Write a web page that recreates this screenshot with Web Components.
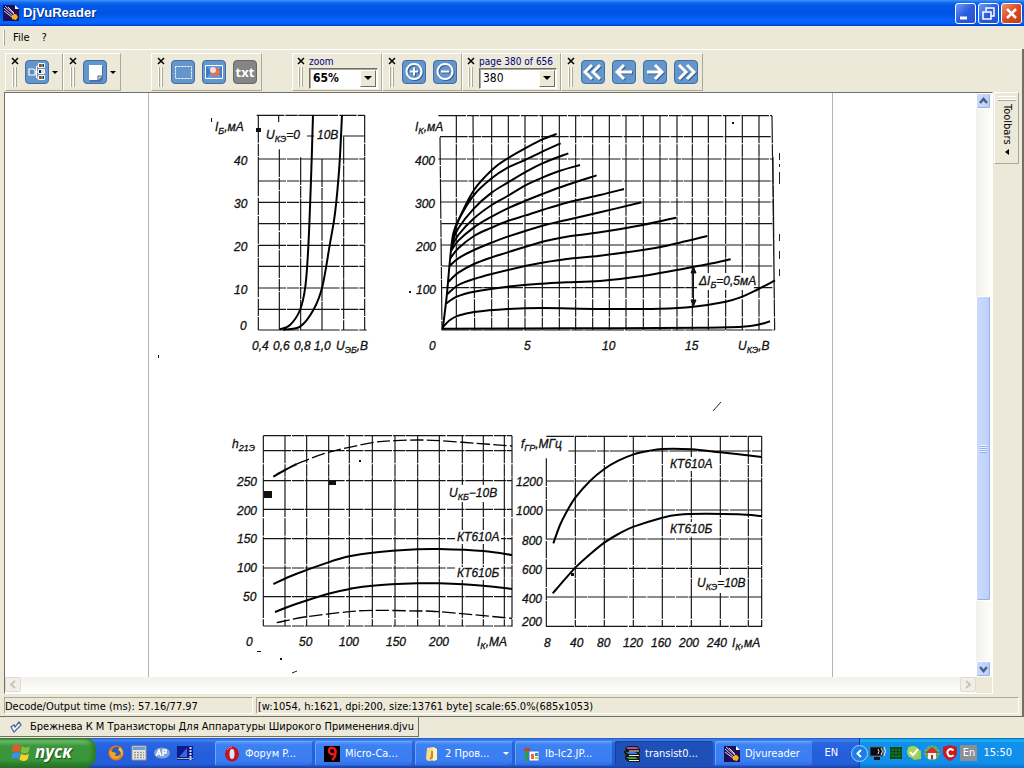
<!DOCTYPE html>
<html lang="ru">
<head>
<meta charset="utf-8">
<title>DjVuReader</title>
<style>
    html, body { height: 100%; }
    body {
        margin: 0;
        display: flex;
        flex-direction: column;
        overflow: hidden;
        background: #ece9d8;
        color: #000;
        font: 11px/14px "DejaVu Sans Condensed", "Liberation Sans", sans-serif;
    }
    reader-window { flex: 1; min-height: 0; }
</style>
</head>
<body>

<reader-window caption="DjVuReader">
    <tool-group slot="tools">
        <tool-button icon="layout" label="Layout" menu></tool-button>
    </tool-group>
    <tool-group slot="tools">
        <tool-button icon="page" label="Page view" menu></tool-button>
    </tool-group>
    <tool-group slot="tools" apart>
        <tool-button icon="select" label="Select"></tool-button>
        <tool-button icon="image" label="Image"></tool-button>
        <tool-button icon="txt" label="Text" grey></tool-button>
    </tool-group>
    <tool-group slot="tools" apart narrow>
        <combo-box label="zoom" value="65%" bold></combo-box>
    </tool-group>
    <tool-group slot="tools">
        <tool-button icon="plus" label="Zoom in"></tool-button>
        <tool-button icon="minus" label="Zoom out"></tool-button>
    </tool-group>
    <tool-group slot="tools" narrow>
        <combo-box label="page 380 of 656" value="380"></combo-box>
    </tool-group>
    <tool-group slot="tools">
        <tool-button icon="first" label="First page"></tool-button>
        <tool-button icon="prev" label="Previous page"></tool-button>
        <tool-button icon="next" label="Next page"></tool-button>
        <tool-button icon="last" label="Last page"></tool-button>
    </tool-group>
    <scan-page></scan-page>
    <span slot="time">Decode/Output time (ms): 57.16/77.97</span>
    <span slot="info">[w:1054, h:1621, dpi:200, size:13761 byte] scale:65.0%(685x1053)</span>
    <span slot="tab">Брежнева К М Транзисторы Для Аппаратуры Широкого Применения.djvu</span>
</reader-window>

<task-bar>
    <xp-icon slot="quick" name="firefox"></xp-icon>
    <xp-icon slot="quick" name="calc"></xp-icon>
    <xp-icon slot="quick" name="ap"></xp-icon>
    <xp-icon slot="quick" name="film"></xp-icon>
    <task-item icon="opera">Форум P...</task-item>
    <task-item icon="nine">Micro-Ca...</task-item>
    <task-item icon="folder" group>2 Пров...</task-item>
    <task-item icon="paint">Ib-Ic2.JP...</task-item>
    <task-item icon="rar" active>transist0...</task-item>
    <task-item icon="djvu">Djvureader</task-item>
    <xp-icon slot="tray" name="monitor"></xp-icon>
    <xp-icon slot="tray" name="cpu"></xp-icon>
    <xp-icon slot="tray" name="shield"></xp-icon>
    <xp-icon slot="tray" name="house"></xp-icon>
    <xp-icon slot="tray" name="comodo"></xp-icon>
</task-bar>

<script>
// ---------- icons ----------
const shade = (d, w) =>
    `<path d="${d}" transform="translate(1 1)" fill="none" stroke="#3a5f8c" stroke-width="${w}"/>
     <path d="${d}" fill="none" stroke="#fff" stroke-width="${w}"/>`;

// [size, markup]
const ICONS = {
    djvu: [16, `<path d="M0 0h12l4 4v12H0z" fill="#1c0f55"/><path d="M12 0v4h4z" fill="#fff"/>
        <path d="M1 3l10 9M2 1l10 9M1 6l9 7M5 2l6 6" stroke="#e9d3ee" stroke-width="1" fill="none"/>
        <path d="M9 10l4-1 2 3-2 3-4-1z" fill="#f5b21c"/>`],
    layout: [24, `<path d="M4 9h4l2 1v5H4z" fill="#5b8dc4" stroke="#fff" stroke-width="1.2"/><path d="M10 12h4M12 6h2M12 18h2M11.500 6v12" stroke="#fff" fill="none"/>
        <g stroke="#fff" fill="#222"><path d="M13.500 3.500h6v4h-6zM13.500 9.500h6v4h-6zM13.500 15.500h6v4h-6z"/></g>
        <path d="M14 4h2v3h-2zM14 16h2v3h-2z" fill="#e22"/><path d="M16 4h2v3h-2zM16 16h2v3h-2z" fill="#2b2"/><path d="M18 4h1v3h-1zM18 16h1v3h-1z" fill="#22e"/><path d="M16 10h3v3h-3z" fill="#ddd"/>`],
    page: [24, `<path d="M7 6h13v14l-3 2H7z" fill="#4a73a3"/><path d="M6 5h13v11l-4 4H6z" fill="#fff"/><path d="M15 20v-4h4" fill="#ccc" stroke="#456a97"/>`],
    select: [24, `<path d="M4.500 6.500h16v12h-16z" fill="none" stroke="#fff" stroke-dasharray="2 1"/>`],
    image: [24, `<path d="M3.500 5.500h17v13h-17z" fill="#5c9fe6" stroke="#fff"/><path d="M4 6l6 6-6 6zM20 6l-5 6 5 6z" fill="#3f7cc5"/>
        <circle cx="13" cy="12" r="5" fill="#d8745e"/><circle cx="11" cy="10" r="3" fill="#fbe0d8"/>`],
    plus: [24, shade('M12 4a7.500 7.500 0 1 0 .1 0zM12 7.500v8M8 11.500h8', 2)],
    minus: [24, shade('M12 4a7.500 7.500 0 1 0 .1 0zM8 11.500h8', 2)],
    first: [24, shade('M11 5l-7 7 7 7M19 5l-7 7 7 7', 3)],
    prev: [24, shade('M20 12H6M12 5l-7 7 7 7', 3)],
    next: [24, shade('M4 12h14M12 5l7 7-7 7', 3)],
    last: [24, shade('M5 5l7 7-7 7M13 5l7 7-7 7', 3)],
    clip: [12, `<path d="M1 6l3 5 7-7-2-3-4 5-1-2z" fill="#fff" stroke="#4a6a9c" stroke-width="1.300"/>`],
    flag: [20, `<path d="M2 4q4-3 8 0l-1.500 6q-4-2-8 0z" fill="#e9562b"/><path d="M11 4q4 3 8 0l-1.500 6q-4 3-8 0z" fill="#7dc242"/>
        <path d="M.3 11.500q4-3 8 0L7 17q-4-2-8 0z" transform="translate(1)" fill="#3f8fe8"/><path d="M10 11.500q4 3 8 0l-1.500 6q-4 3-8 0z" fill="#fbd02c"/>`],
    firefox: [16, `<circle cx="8" cy="8" r="7.500" fill="#e8761c"/><circle cx="8.500" cy="6.500" r="4.500" fill="#2b5fb5"/><path d="M1 3q0 4 4 4l3 1-1 3q4 1 6-2-1 5-6 5-6-1-6-11z" fill="#f6a424"/><path d="M12 2q4 4 2 9-1-5-4-6z" fill="#f9c13d"/>`],
    calc: [16, `<path d="M1 1h14v14H1z" fill="#e8e8e2" stroke="#9a9a90"/><path d="M2 2h12v3H2z" fill="#6f9bd8"/><path d="M3 7.500h10M3 10h10M3 12.500h10" stroke="#9a9a9a" stroke-dasharray="2 1" stroke-width="1.500"/>`],
    ap: [16, `<ellipse cx="8" cy="8" rx="8" ry="5.500" fill="#7fa3d6"/><path d="M2 11l3-6 2 6M3 9h3M9 11V5h3v3H9" stroke="#fff" fill="none" stroke-width="1.500"/>`],
    film: [16, `<path d="M0 1h16v14H0z" fill="#0b1b8a"/><path d="M2 12l8-9v9z" fill="#3567e8"/><path d="M13.500 2v13" stroke="#dde" stroke-width="2" stroke-dasharray="2 1"/><path d="M0 13.500h16" stroke="#aab"/>`],
    opera: [16, `<ellipse cx="8" cy="8" rx="7" ry="7.500" fill="#c4121a"/><ellipse cx="8" cy="8" rx="2.500" ry="5" fill="#dce6fb"/><path d="M3 4q2-3 5-3" stroke="#f77" fill="none"/>`],
    nine: [16, `<path d="M0 0h16v16H0z" fill="#000"/><path d="M11 8Q5 9 5 5t3.500-3Q12 2 11.500 7T8 14" stroke="#f01818" stroke-width="2.500" fill="none"/>`],
    folder: [16, `<path d="M3 2l6-1 4 2v11l-9 1-2-2z" fill="#f6dc8c"/><path d="M9 1l4 2v11l-4 1z" fill="#fff2bf"/><path d="M8 5v6l-2 2" stroke="#c48a2c" stroke-width="2" fill="none"/>`],
    paint: [16, `<path d="M5 5h10v10H5z" fill="#fff" stroke="#3a78d0"/><path d="M2.500 5v10" stroke="#2f9b4a" stroke-width="3"/><path d="M0 2h6v3H0z" fill="#c8432b"/><path d="M7 8h3v5H7z" fill="#f06a28"/><path d="M11 7h3v3h-3z" fill="#3b82e0"/><path d="M11 11h3v2h-3z" fill="#f4bc2c"/>`],
    rar: [16, `<path d="M1 2l3-2h9l3 3v3l-1 1 1 1v3l-1 1 1 1v3H5l-4-3v-3l1-1-2-2V5l2-1z" fill="#181818"/>
        <path d="M2 2l2-1h8l3 2H4z" fill="#c04aa8"/><path d="M2 6h9l3 2H5z" fill="#3b7ee0"/><path d="M2 11h9l3 2H5z" fill="#3ea54b"/>
        <path d="M5 5h10M5 9.500h10M5 14.500h10" stroke="#f2efe0"/>`],
    monitor: [16, `<path d="M0 2h13v9H0z" fill="#0a0a14" stroke="#566"/><path d="M4 12h6v3H4z" fill="#111"/><path d="M8 4q2 2 0 5M11 3q3 3 0 7M14 2q3 4 0 9" stroke="#e8eef8" fill="none"/>`],
    cpu: [16, `<path d="M2 2h12v12H2z" fill="#063d12"/><path d="M2 5h12M2 8h12M2 11h12M5 2v12M8 2v12M11 2v12" stroke="#127a2a" stroke-width="1"/>`],
    shield: [16, `<path d="M2 2l6-1 7 5v8l-7 1-6-6z" fill="#9ad04e"/><circle cx="7" cy="7" r="6" fill="#a8d45a"/><path d="M4 7l3 3 5-6" stroke="#fff" stroke-width="2" fill="none"/>`],
    house: [16, `<circle cx="8" cy="8" r="7" fill="#6aa84f" stroke="#9c6" stroke-dasharray="2 2"/><path d="M1 8l7-6 7 6z" fill="#c33"/><path d="M4 8h8v6H4z" fill="#f2f2ec"/><path d="M7 10h2v4H7z" fill="#a33"/>`],
    comodo: [16, `<path d="M1 2l7-2 7 2v7q-2 5-7 7-5-2-7-7z" fill="#cc1a1c"/><path d="M11.500 5.500Q9 3 6.500 5T7 11q3 1 4.500-1" stroke="#fff" stroke-width="2" fill="none"/>`]
};

class XpIcon extends HTMLElement {
    constructor() {
        super();
        this.attachShadow({ mode: 'open' });
    }

    connectedCallback() {
        const [size, body] = ICONS[this.getAttribute('name')];
        this.shadowRoot.innerHTML = `
            <style>:host { display: block; flex: none; } svg { display: block; }</style>
            <svg width="${size}" height="${size}" viewBox="0 0 ${size} ${size}" aria-hidden="true">${body}</svg>`;
    }
}
customElements.define('xp-icon', XpIcon);


// ---------- toolbar ----------
class ToolGroup extends HTMLElement {
    constructor() {
        super();
        this.attachShadow({ mode: 'open' });
        this.shadowRoot.innerHTML = `
            <style>
                :host {
                    display: flex;
                    box-sizing: border-box;
                    height: 38px;
                    padding-right: 4px;
                    border: 1px solid;
                    border-color: #fff #aca899 #aca899 #fff;
                }
                :host([apart]) { margin-left: 30px; }
                :host([narrow]) { padding-right: 3px; }
                .side {
                    width: 18px;
                    display: flex;
                    flex-direction: column;
                    align-items: center;
                    padding-top: 3px;
                }
                :host([narrow]) .side { width: 16px; }
                button { display: block; width: 8px; height: 8px; padding: 0; border: 0; background: none; }
                svg { display: block; }
                .grip {
                    width: 2px;
                    height: 20px;
                    margin-top: 2px;
                    border: solid #aca899;
                    border-width: 0 1px;
                    box-shadow: -1px 0 #fff, inset -1px 0 #fff;
                }
                .items { display: flex; gap: 7px; align-items: center; }
            </style>
            <div class="side">
                <button aria-label="Close toolbar"><svg width="8" height="8"><path d="M1 1l6 6M7 1L1 7" stroke="#000" stroke-width="1.500"/></svg></button>
                <div class="grip"></div>
            </div>
            <div class="items"><slot></slot></div>`;
    }
}
customElements.define('tool-group', ToolGroup);


class ToolButton extends HTMLElement {
    constructor() {
        super();
        this.attachShadow({ mode: 'open' });
    }

    connectedCallback() {
        const icon = this.getAttribute('icon');
        const face = icon === 'txt' ? 'txt' : `<xp-icon name="${icon}"></xp-icon>`;
        this.shadowRoot.innerHTML = `
            <style>
                :host { display: block; padding-left: 1px; }
                :host(:not(:first-child)) { padding-left: 0; }
                button { display: flex; align-items: center; gap: 3px; padding: 0; border: 0; background: none; }
                .face {
                    display: flex;
                    align-items: center;
                    justify-content: center;
                    box-sizing: border-box;
                    width: 24px;
                    height: 24px;
                    border: 1px solid #3f6fa8;
                    border-radius: 4px;
                    background: #6496cb;
                    color: #fff;
                    font: bold 13px/20px "Open Sans", sans-serif;
                }
                :host([grey]) .face { background: #858585; border-color: #666; }
                .arrow { border: 3px solid transparent; border-top-color: #000; border-bottom: 0; }
            </style>
            <button aria-label="${this.getAttribute('label')}">
                <span class="face">${face}</span>
                ${this.hasAttribute('menu') ? '<span class="arrow"></span>' : ''}
            </button>`;
    }
}
customElements.define('tool-button', ToolButton);


class ComboBox extends HTMLElement {
    constructor() {
        super();
        this.attachShadow({ mode: 'open' });
    }

    connectedCallback() {
        this.shadowRoot.innerHTML = `
            <style>
                :host { display: block; }
                label { display: block; color: #000080; font: 10px/12px "DejaVu Sans Condensed", sans-serif; }
                .box {
                    display: grid;
                    grid-template-columns: 1fr 16px;
                    box-sizing: border-box;
                    width: 78px;
                    height: 21px;
                    padding: 1px;
                    border: 1px solid;
                    border-color: #716f64 #fff #fff #716f64;
                    background: #fff;
                    box-shadow: inset 1px 1px #aca899;
                }
                :host([bold]) .box { width: 69px; }
                :host([bold]) select { font-weight: bold; }
                select {
                    grid-area: 1 / 1 / 2 / 3;
                    appearance: none;
                    border: 0;
                    padding: 0 2px;
                    background: none;
                    color: #000;
                    font: 12px/16px "DejaVu Sans Condensed", sans-serif;
                }
                .drop {
                    grid-area: 1 / 2;
                    display: flex;
                    align-items: center;
                    justify-content: center;
                    border: 1px solid;
                    border-color: #fff #716f64 #716f64 #fff;
                    background: #ece9d8;
                    pointer-events: none;
                }
                .drop i { border: 4px solid transparent; border-top-color: #000; border-bottom: 0; }
            </style>
            <label for="list">${this.getAttribute('label')}</label>
            <div class="box">
                <select id="list"><option>${this.getAttribute('value')}</option></select>
                <span class="drop"><i></i></span>
            </div>`;
    }
}
customElements.define('combo-box', ComboBox);


// ---------- scanned page ----------
// Curve points and grid positions are measured at 3x, "at" is the chart's origin on the sheet.
const CHARTS = [
    {
        at: [200, 100],
        lines: [
            'M175 45V690', 'M236 45V66', 'M238 148V690', 'M302 172V690', 'M366 178V690', 'M431 110V690', 'M494 45V690',
            'M170 46H494', 'M320 108H342', 'M428 108H494', 'M175 177H494', 'M175 243H494', 'M175 307H494', 'M175 371H494',
            'M175 436H494', 'M175 499H494', 'M175 564H494', 'M175 628H494', 'M175 690H500'
        ],
        curves: [
            [240,688, 270,675, 300,630, 316,560, 325,440, 333,240, 339,45],
            [250,689, 300,680, 340,630, 367,560, 390,430, 405,340, 418,200, 426,45]
        ]
    },
    {
        at: [400, 100],
        lines: [
            'M120 112L126 690', 'M169 47V690', 'M219 47L224 690', 'M275 47V690', 'M325 47V690', 'M375 47V690', 'M427 47V690',
            'M478 47V690', 'M527 47V690', 'M578 47V690', 'M628 47V690', 'M678 47V690', 'M730 47V690', 'M780 47V690',
            'M831 47V690', 'M877 47V690', 'M925 47V690', 'M977 47V690', 'M1027 47V690', 'M1077 47V690', 'M1116 47L1124 690', 'M1119 170L1123 600',
            'M115 47H1116', 'M120 110H1116', 'M115 177H1116', 'M120 243H1120', 'M120 306H1120', 'M125 371H1120', 'M125 435H1120',
            'M125 498H1120', 'M125 563H1120', 'M125 690H1124'
        ],
        curves: [
            [128,688, 140,590, 150,480, 160,400, 180,350, 222,270, 278,208, 323,175, 375,145, 427,118, 470,102],
            [158,410, 180,352, 222,285, 275,235, 323,203, 375,180, 427,155, 482,130],
            [155,430, 175,385, 222,325, 275,278, 323,248, 375,217, 427,190, 505,160],
            [154,442, 175,405, 222,355, 275,315, 323,288, 375,257, 427,233, 478,213, 540,195],
            [152,455, 175,422, 222,382, 275,350, 323,325, 375,303, 427,282, 500,255, 590,226],
            [151,475, 175,445, 222,408, 275,383, 323,363, 375,347, 427,330, 500,308, 600,285, 672,267],
            [150,497, 175,475, 222,450, 275,428, 323,410, 427,377, 500,360, 600,337, 725,307],
            [146,545, 175,518, 222,492, 275,472, 323,457, 427,425, 500,410, 600,397, 728,375, 828,353],
            [142,582, 175,555, 222,537, 275,522, 375,498, 427,488, 500,477, 600,467, 728,450, 800,437, 922,408],
            [137,612, 170,590, 222,575, 323,560, 427,551, 500,547, 600,543, 728,528, 830,510, 922,493, 992,478],
            [128,682, 150,660, 175,647, 222,636, 323,627, 427,624, 600,627, 780,626, 880,620, 977,605, 1027,590, 1070,570, 1125,541],
            [125,686, 500,685, 900,683, 1027,680, 1080,673, 1110,664]
        ]
    },
    {
        at: [220, 420],
        lines: [
            'M130 47V618', 'M195 47V618', 'M260 47V618', 'M326 47V618', 'M388 47V618', 'M457 47V618', 'M525 47V618', 'M593 47V618',
            'M658 47V618', 'M727 47V618', 'M790 47V618', 'M853 47V618', 'M876 47V620',
            'M130 47H876', 'M130 92H876', 'M130 182H876', 'M130 268H876', 'M130 356H876', 'M130 444H876', 'M130 530H876', 'M130 618H876'
        ],
        curves: [
            [160,492, 228,462, 325,427, 388,409, 457,398, 592,388, 658,387, 790,393, 876,405],
            [165,576, 228,552, 325,521, 388,507, 457,497, 592,490, 658,490, 790,497, 876,507],
            [160,170, 195,150, 230,132]
        ],
        dashed: [
            [230,132, 325,97, 457,68, 525,62, 592,60, 658,62, 770,70, 876,78],
            [170,608, 260,590, 388,575, 457,571, 592,573, 658,575, 876,595]
        ]
    },
    {
        at: [505, 395],
        lines: [
            'M124 190V695', 'M211 124V695', 'M298 124V695', 'M385 124V695', 'M472 124V695', 'M559 124V695', 'M646 124V695', 'M730 124V695', 'M770 124V695',
            'M124 124H770', 'M190 168H770', 'M124 258H770', 'M124 345H770', 'M124 432H770', 'M124 520H770', 'M124 606H770', 'M124 694H772'
        ],
        curves: [
            [145,445, 165,390, 185,350, 211,308, 255,258, 298,222, 340,197, 386,178, 430,168, 472,162, 559,163, 646,172, 770,186],
            [143,595, 211,518, 255,478, 298,443, 340,417, 386,395, 472,368, 520,359, 600,356, 700,358, 770,363]
        ]
    }
];

// x, baseline, text, subscript, rest
const LABELS = [
    [215, 131, 'I', 'Б', ',мА'], [234, 165, '40'], [234, 208, '30'], [234, 251, '20'], [234, 294, '10'], [240, 330, '0'],
    [252, 350, '0,4'], [273, 350, '0,6'], [294, 350, '0,8'], [314, 350, '1,0'], [336, 350, 'U', 'ЭБ', ',В'],
    [266, 139, 'U', 'КЭ', '=0'], [317, 139, '10В'],
    [415, 131, 'I', 'К', ',мА'], [415, 165, '400'], [415, 208, '300'], [416, 251, '200'], [416, 294, '100'],
    [429, 350, '0'], [524, 350, '5'], [602, 350, '10'], [685, 350, '15'], [738, 350, 'U', 'КЭ', ',В'],
    [699, 285, 'ΔI', 'Б', '=0,5мА'],
    [232, 448, 'h', '21Э', ''], [237, 486, '250'], [237, 515, '200'], [237, 543, '150'], [237, 572, '100'], [243, 601, '50'],
    [246, 646, '0'], [299, 646, '50'], [339, 646, '100'], [386, 646, '150'], [429, 646, '200'], [477, 646, 'I', 'К', ',МА'],
    [449, 497, 'U', 'КБ', '−10В'], [457, 541, 'КТ610А'], [457, 577, 'КТ610Б'],
    [521, 448, 'f', 'ГР', ',МГц'], [516, 486, '1200'], [516, 515, '1000'], [522, 545, '800'], [522, 574, '600'], [522, 603, '400'], [522, 626, '200'],
    [544, 647, '8'], [570, 647, '40'], [597, 647, '80'], [623, 647, '120'], [651, 647, '160'], [679, 647, '200'], [707, 647, '240'], [732, 647, 'I', 'К', ',мА'],
    [670, 468, 'КТ610А'], [670, 533, 'КТ610Б'], [697, 587, 'U', 'КЭ', '=10В']
];

// smooth path through a flat list of points
function spline(p) {
    let d = `M${p[0]} ${p[1]}`;
    const n = p.length / 2;
    const pt = (i) => { i = Math.max(0, Math.min(n - 1, i)); return [p[2 * i], p[2 * i + 1]]; };
    for (let i = 0; i < n - 1; i++) {
        const [a, b, c, e] = [pt(i - 1), pt(i), pt(i + 1), pt(i + 2)];
        d += `C${b[0] + (c[0] - a[0]) / 6} ${b[1] + (c[1] - a[1]) / 6} ${c[0] - (e[0] - b[0]) / 6} ${c[1] - (e[1] - b[1]) / 6} ${c[0]} ${c[1]}`;
    }
    return d;
}

class ScanPage extends HTMLElement {
    constructor() {
        super();
        this.attachShadow({ mode: 'open' });

        const group = (chart, body) => `<g transform="translate(${chart.at}) scale(.33333)">${body}</g>`;
        let grid = '';
        let curves = '';
        CHARTS.forEach((chart) => {
            grid += group(chart, `<path d="${chart.lines.join('')}"/>`);
            curves += group(chart, `<path d="${chart.curves.map(spline).join('')}"/>
                <path d="${(chart.dashed || []).map(spline).join('')}" stroke-width="4" stroke-dasharray="40 10"/>`);
        });
        const texts = LABELS.map(([x, y, main, sub, rest]) => sub
            ? `<text x="${x}" y="${y}">${main}<tspan class="sub" dy="3">${sub}</tspan><tspan dy="-3">${rest}</tspan></text>`
            : `<text x="${x}" y="${y}">${main}</text>`).join('');

        this.shadowRoot.innerHTML = `
            <style>
                :host {
                    display: block;
                    width: 683px;
                    border: solid #b4b4b4;
                    border-width: 0 1px;
                    background: #fff;
                    overflow: hidden;
                }
                svg { display: block; }
                /* uneven dashes: the print is slightly broken */
                .grid { fill: none; stroke: #161616; stroke-width: 3.500; stroke-dasharray: 83 3 37 2 119 4 52 3; }
                .curves { fill: none; stroke: #000; stroke-width: 6; }
                text { font: italic 12px "Liberation Sans", sans-serif; fill: #111; stroke: #111; stroke-width: .3px; }
                .sub { font-size: 9px; }
            </style>
            <svg width="683" height="585" viewBox="149 93 683 585">
                <g class="grid">${grid}</g>
                <g fill="#fff">
                    <path d="M262 126h45v18h-45zM316 126h22v18h-22zM697 273h57v17h-57zM448 485h50v17h-50zM455 530h46v14h-46zM455 567h46v13h-46z"/>
                    <path d="M668 457h46v14h-46zM668 522h46v14h-46zM694 575h50v18h-50z"/>
                </g>
                <g class="curves">${curves}</g>
                <path d="M693.500 268v37M691 273l2.500-6 2.500 6zM691 300l2.500 6 2.500-6z" fill="#111" stroke="#111"/>
                <path d="M779.500 153v7M779.500 164v3M779.500 172v12M779.500 234v7M779.500 251v8M779.500 269v7M713 411l8-9M292 673l5-2" fill="none" stroke="#222"/>
                <path d="M256 128h5v4h-5zM264 491h8v7h-8zM329 481h7v4h-7zM359 460h2v2h-2zM409 291h2v2h-2zM211 118h1v4h-1zM158 355h1v3h-1zM280 658h2v2h-2zM257 651h4v1h-4zM732 122h2v2h-2zM571 573h3v3h-3z" fill="#111"/>
                ${texts}
            </svg>`;
    }
}
customElements.define('scan-page', ScanPage);


// ---------- main window ----------
const windowTemplate = document.createElement('template');
windowTemplate.innerHTML = `
    <style>
        :host { display: flex; flex-direction: column; }
        button { padding: 0; border: 0; background: none; font: inherit; color: inherit; }
        header {
            display: flex;
            align-items: center;
            box-sizing: border-box;
            height: 26px;
            padding: 0 2px 0 3px;
            background: linear-gradient(#3d95ff 0, #1b72f2 2px, #0458e8 5px, #0054e3 14px, #0363fb 20px, #0363fb 23px, #003fd0 26px);
        }
        h1 {
            flex: 1;
            margin: 0 0 0 4px;
            color: #fff;
            font: bold 13px/20px "Liberation Sans", sans-serif;
            text-shadow: 1px 1px #0a2a7c;
        }
        .caps { display: flex; gap: 2px; }
        .caps button {
            box-sizing: border-box;
            width: 21px;
            height: 21px;
            border: 1px solid #fff;
            border-radius: 3px;
            background: linear-gradient(135deg, #6f9cf5, #2a5ce0 50%, #2353cf);
        }
        .caps .x { background: linear-gradient(135deg, #f0906e, #dd4a22 50%, #c43a12); }
        .caps svg { display: block; fill: none; stroke: #fff; stroke-width: 2; }

        nav { display: flex; align-items: center; gap: 12px; height: 23px; padding-left: 4px; }
        nav::before { content: ""; width: 1px; height: 16px; background: #aca899; box-shadow: -1px 0 #fff; margin-right: -4px; }

        .window { flex: 1; min-height: 0; display: flex; flex-direction: column; border-right: 2px solid #716f64; }
        .tools {
            display: flex;
            align-items: flex-start;
            box-sizing: border-box;
            height: 43px;
            padding: 3px 0 0 5px;
            border-top: 1px solid #fff;
        }
        .body { flex: 1; min-height: 0; display: flex; padding: 0 1px 0 4px; }
        .view {
            flex: 1;
            min-width: 0;
            display: grid;
            grid-template: 1fr 16px / 1fr 16px;
            border: 1px solid;
            border-color: #716f64 #fff #fff #716f64;
        }
        .paper { display: flex; justify-content: center; overflow: hidden; min-height: 0; background: #fff; }
        .vbar { display: flex; flex-direction: column; background: linear-gradient(90deg, #f3f1ec, #fefefb); }
        .vbar button, .thumb {
            box-sizing: border-box;
            width: 15px;
            border: 1px solid #fff;
            border-radius: 2px;
            box-shadow: inset -1px -1px #98b0e8;
            background: linear-gradient(90deg, #cddafd, #bccffb);
        }
        .vbar button { height: 16px; flex: none; }
        .vbar svg { display: block; fill: none; stroke: #4d6185; stroke-width: 2.500; }
        .above { flex: 188 0 0; }
        .thumb { flex: 304 0 0; display: flex; align-items: center; justify-content: center; }
        .below { flex: 60 0 0; }
        .thumb i { width: 7px; height: 8px; background: repeating-linear-gradient(#eef4fe 0 1px, #8cb0f8 1px 2px); }
        .hbar { display: flex; justify-content: space-between; background: linear-gradient(#f3f1ec, #fefefb); }
        .hbar button {
            box-sizing: border-box;
            width: 16px;
            height: 15px;
            border: 1px solid #dedbd0;
            border-radius: 2px;
            background: #f2f0e6;
        }
        .hbar svg { display: block; fill: none; stroke: #c6c3b8; stroke-width: 2; }
        .dock { width: 28px; box-sizing: border-box; padding-left: 1px; }
        .dock button {
            box-sizing: border-box;
            width: 25px;
            height: 72px;
            display: flex;
            align-items: center;
            flex-direction: column;
            gap: 4px;
            padding-top: 3px;
            border: 1px solid;
            border-color: #fff #aca899 #aca899 #fff;
            line-height: 14px;
        }
        .dock button::before { content: ""; width: 18px; height: 2px; flex: none; border: solid #fff; border-width: 1px 0; box-shadow: 0 1px #aca899; }
        .dock span { writing-mode: vertical-rl; }
        .dock i { border: 3px solid transparent; border-right: 4px solid #000; border-left: 0; }

        .status { display: flex; gap: 3px; box-sizing: border-box; height: 23px; padding: 3px 3px 2px 4px; border-bottom: 1px solid #716f64; }
        .status div { box-sizing: border-box; border: 1px solid; border-color: #aca899 #fff #fff #aca899; line-height: 17px; }
        .status .time { width: 249px; }
        .status .info { flex: 1; padding-left: 1px; }
        .tabs { display: flex; height: 21px; }
        .tabs button {
            display: flex;
            align-items: center;
            gap: 8px;
            box-sizing: border-box;
            height: 20px;
            padding: 0 4px 0 10px;
            border: solid #716f64;
            border-width: 0 1px 1px 0;
        }
    </style>
    <header>
        <xp-icon name="djvu"></xp-icon>
        <h1></h1>
        <div class="caps">
            <button aria-label="Minimize"><svg width="19" height="19"><path d="M4 14h7" stroke-width="3"/></svg></button>
            <button aria-label="Restore"><svg width="19" height="19"><path d="M7 7V4h8v8h-3" stroke-width="1.500"/><path d="M4 8h8v7H4z" stroke-width="1.500"/></svg></button>
            <button class="x" aria-label="Close"><svg width="19" height="19"><path d="M5 5l9 9M14 5l-9 9" stroke-width="2.500"/></svg></button>
        </div>
    </header>
    <nav><button>File</button><button>?</button></nav>
    <div class="window">
        <div class="tools"><slot name="tools"></slot></div>
        <div class="body">
            <div class="view">
                <div class="paper"><slot></slot></div>
                <div class="vbar">
                    <button aria-label="Up"><svg width="13" height="14"><path d="M3 9l3.500-4L10 9"/></svg></button>
                    <div class="above"></div>
                    <div class="thumb"><i></i></div>
                    <div class="below"></div>
                    <button aria-label="Down"><svg width="13" height="14"><path d="M3 5l3.500 4L10 5"/></svg></button>
                </div>
                <div class="hbar">
                    <button aria-label="Left"><svg width="14" height="13"><path d="M9 3L5 6.500 9 10"/></svg></button>
                    <button aria-label="Right"><svg width="14" height="13"><path d="M5 3l4 3.500L5 10"/></svg></button>
                </div>
            </div>
            <div class="dock"><button><span>Toolbars</span><i></i></button></div>
        </div>
        <div class="status">
            <div class="time"><slot name="time"></slot></div>
            <div class="info"><slot name="info"></slot></div>
        </div>
    </div>
    <div class="tabs"><button><xp-icon name="clip"></xp-icon><slot name="tab"></slot></button></div>
`;

class ReaderWindow extends HTMLElement {
    constructor() {
        super();
        this.attachShadow({ mode: 'open' });
        this.shadowRoot.appendChild(windowTemplate.content.cloneNode(true));
        this.shadowRoot.querySelector('h1').textContent = this.getAttribute('caption');
    }
}
customElements.define('reader-window', ReaderWindow);


// ---------- task bar ----------
class TaskItem extends HTMLElement {
    constructor() {
        super();
        this.attachShadow({ mode: 'open' });
        this.shadowRoot.innerHTML = `
            <style>
                :host { display: block; flex: 0 1 98px; min-width: 0; }
                button {
                    display: flex;
                    align-items: center;
                    gap: 5px;
                    box-sizing: border-box;
                    width: 100%;
                    height: 25px;
                    padding: 0 4px 0 9px;
                    border: 0;
                    border-radius: 3px;
                    background: linear-gradient(#5a9bfb, #3c81f3 4px, #3a7df0 20px, #2f6be0);
                    box-shadow: inset 1px 1px #6ba6fb, inset -1px -1px #2a5fcf;
                    color: #fff;
                    font: inherit;
                    white-space: nowrap;
                }
                :host([active]) button { background: #1e50b8; box-shadow: inset 1px 1px #173f98; }
                span { flex: 1; text-align: left; }
                i { display: none; border: 3px solid transparent; border-top-color: #fff; border-bottom: 0; }
                :host([group]) i { display: block; }
            </style>
            <button><xp-icon name="${this.getAttribute('icon')}"></xp-icon><span><slot></slot></span><i></i></button>`;
    }
}
customElements.define('task-item', TaskItem);


class TaskBar extends HTMLElement {
    constructor() {
        super();
        this.attachShadow({ mode: 'open' });
        this.shadowRoot.innerHTML = `
            <style>
                :host {
                    display: flex;
                    flex: none;
                    height: 30px;
                    color: #fff;
                    background: linear-gradient(#1f4fc0 0, #3f84f4 2px, #2a66e2 5px, #245edb 15px, #245edb 26px, #1941a5 30px);
                }
                .start {
                    display: flex;
                    align-items: center;
                    gap: 4px;
                    box-sizing: border-box;
                    width: 96px;
                    padding: 0 0 2px 11px;
                    border: 0;
                    border-radius: 0 10px 12px 0;
                    background: linear-gradient(#2f7a2f 0, #6dbb6a 3px, #3c963c 8px, #379637 22px, #256b25 30px);
                    box-shadow: inset -3px 0 4px #2a752a;
                    color: #fff;
                    font: italic bold 17px/24px "Open Sans", sans-serif;
                    text-shadow: 1px 1px 1px #1c4a1c;
                }
                .quick { display: flex; align-items: center; gap: 7px; width: 119px; box-sizing: border-box; padding-left: 12px; }
                .tasks { flex: 1; min-width: 0; display: flex; gap: 2px; padding-top: 3px; }
                .lang { align-self: center; width: 35px; }
                .tray {
                    display: flex;
                    align-items: center;
                    gap: 2px;
                    box-sizing: border-box;
                    padding-right: 12px;
                    border-left: 1px solid #0b3f9c;
                    background: linear-gradient(#0c59b9 0, #19b9f3 2px, #1290e9 5px, #118eea 25px, #0d6fc8 30px);
                }
                .more {
                    width: 17px;
                    height: 17px;
                    margin: 0 0 0 -9px;
                    padding: 0;
                    border: 1px solid #9fd4fb;
                    border-radius: 50%;
                    background: #1c7ee6;
                }
                .more svg { display: block; fill: none; stroke: #fff; stroke-width: 2; }
                .en { width: 17px; background: #8b8f98; text-align: center; line-height: 16px; }
                time { margin-left: 4px; }
            </style>
            <button class="start"><xp-icon name="flag"></xp-icon>пуск</button>
            <div class="quick"><slot name="quick"></slot></div>
            <div class="tasks"><slot></slot></div>
            <span class="lang">EN</span>
            <div class="tray">
                <button class="more" aria-label="Show hidden icons"><svg width="15" height="15"><path d="M9 4L5.500 7.500 9 11"/></svg></button>
                <slot name="tray"></slot>
                <span class="en">En</span>
                <time>15:50</time>
            </div>`;
    }
}
customElements.define('task-bar', TaskBar);
</script>
</body>
</html>
